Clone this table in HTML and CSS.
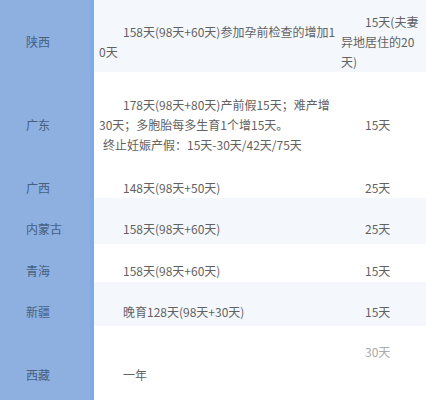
FILE: index.html
```html
<!DOCTYPE html>
<html lang="zh-CN">
<head>
<meta charset="utf-8">
<link rel="stylesheet" href="styles.css">
</head>
<body>
<table class="leave">
  <colgroup><col class="c-prov"><col class="c-days"><col class="c-extra"></colgroup>
  <tr class="r1 tint">
    <td class="prov">陕西</td>
    <td class="txt ind">158天(98天+60天)参加孕前检查的增加1<br>0天</td>
    <td class="txt ind">15天(夫妻<br>异地居住的20<br>天)</td>
  </tr>
  <tr class="r2">
    <td class="prov">广东</td>
    <td class="txt ind">178天(98天+80天)产前假15天；难产增<br>30天；多胞胎每多生育1个增15天。<br><span class="sp">终止妊娠产假：15天-30天/42天/75天</span></td>
    <td class="txt ind">15天</td>
  </tr>
  <tr class="r3">
    <td class="prov">广西</td>
    <td class="txt ind">148天(98天+50天)</td>
    <td class="txt ind">25天</td>
  </tr>
  <tr class="r4 tint">
    <td class="prov">内蒙古</td>
    <td class="txt ind">158天(98天+60天)</td>
    <td class="txt ind">25天</td>
  </tr>
  <tr class="r5">
    <td class="prov">青海</td>
    <td class="txt ind">158天(98天+60天)</td>
    <td class="txt ind">15天</td>
  </tr>
  <tr class="r6 tint">
    <td class="prov">新疆</td>
    <td class="txt ind">晚育128天(98天+30天)</td>
    <td class="txt ind">15天</td>
  </tr>
  <tr class="r7">
    <td class="prov">西藏</td>
    <td class="txt ind">一年</td>
    <td class="txt ind top faint">30天</td>
  </tr>
</table>
</body>
</html>
```

FILE: styles.css
```css
html, body {
  margin: 0;
  padding: 0;
  background: #ffffff;
  overflow: hidden;
}
.leave {
  width: 426px;
  margin-top: -4px;
  border-collapse: collapse;
  table-layout: fixed;
  font-family: "Noto Sans CJK SC", "Microsoft YaHei", sans-serif;
  font-size: 12px;
  line-height: 20px;
  color: #626262;
}
.c-prov { width: 92px; }
.c-days { width: 244px; }
.c-extra { width: 90px; }
.leave td {
  padding: 16px 0 0 5px;
  vertical-align: middle;
  white-space: nowrap;
  overflow: visible;
}
.leave td.prov {
  background: #8db0e1;
  border-right: 4px solid #7eaae6;
  color: #46607f;
  padding-left: 26px;
}
.tint td.txt { background: #f4f8fd; }
.ind { text-indent: 24px; }
.sp { padding-left: 4px; }
.leave td.top { vertical-align: top; }
.faint { color: #ababab; }
.r1 { height: 76px; }
.r2 { height: 90px; }
.r3 { height: 36px; }
.r4 { height: 46px; }
.r5 { height: 38px; }
.r6 { height: 44px; }
.r7 { height: 82px; }
```
